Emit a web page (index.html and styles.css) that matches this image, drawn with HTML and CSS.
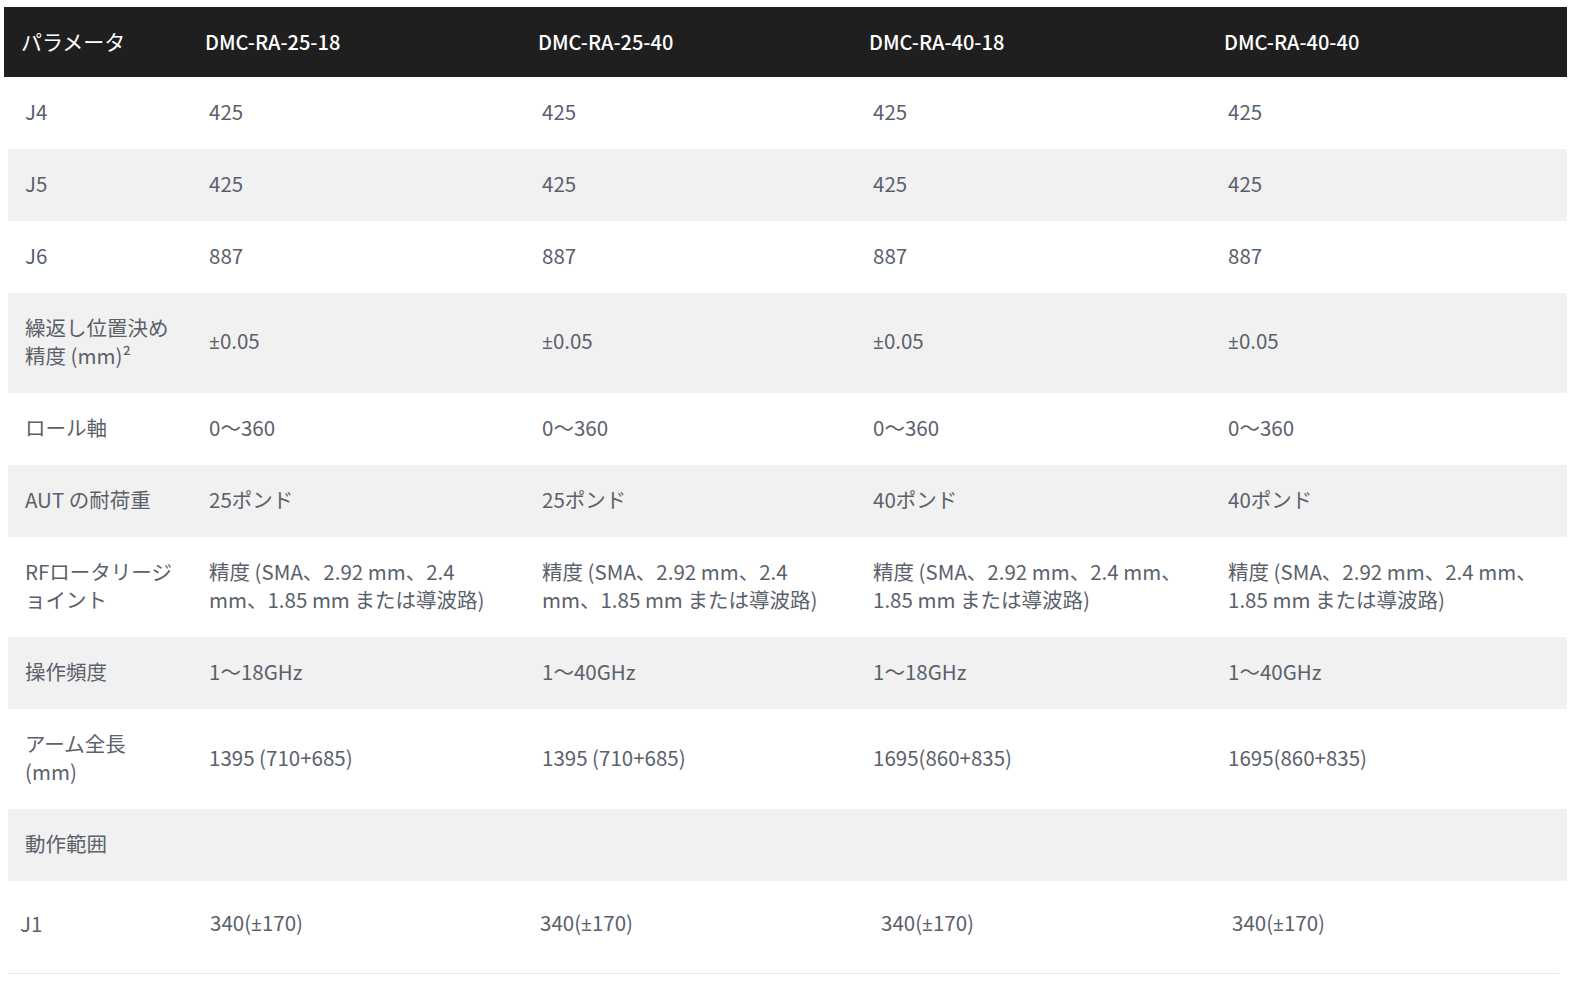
FILE: index.html
```html
<!DOCTYPE html>
<html lang="ja">
<head>
<meta charset="utf-8">
<title>仕様</title>
<link rel="stylesheet" href="styles.css">
</head>
<body>
<div class="page">
  <div class="spec">
    <div class="row head">
      <div class="cell"><span class="jp">パラメータ</span></div>
      <div class="cell">DMC-RA-25-18</div>
      <div class="cell">DMC-RA-25-40</div>
      <div class="cell">DMC-RA-40-18</div>
      <div class="cell">DMC-RA-40-40</div>
    </div>
    <div class="row">
      <div class="cell label">J4</div>
      <div class="cell">425</div>
      <div class="cell">425</div>
      <div class="cell">425</div>
      <div class="cell">425</div>
    </div>
    <div class="row alt">
      <div class="cell label">J5</div>
      <div class="cell">425</div>
      <div class="cell">425</div>
      <div class="cell">425</div>
      <div class="cell">425</div>
    </div>
    <div class="row">
      <div class="cell label">J6</div>
      <div class="cell">887</div>
      <div class="cell">887</div>
      <div class="cell">887</div>
      <div class="cell">887</div>
    </div>
    <div class="row alt">
      <div class="cell label">繰返し位置決め精度 (mm)²</div>
      <div class="cell"><span class="pm">±</span>0.05</div>
      <div class="cell"><span class="pm">±</span>0.05</div>
      <div class="cell"><span class="pm">±</span>0.05</div>
      <div class="cell"><span class="pm">±</span>0.05</div>
    </div>
    <div class="row">
      <div class="cell label">ロール軸</div>
      <div class="cell">0～360</div>
      <div class="cell">0～360</div>
      <div class="cell">0～360</div>
      <div class="cell">0～360</div>
    </div>
    <div class="row alt">
      <div class="cell label">AUT の耐荷重</div>
      <div class="cell">25ポンド</div>
      <div class="cell">25ポンド</div>
      <div class="cell">40ポンド</div>
      <div class="cell">40ポンド</div>
    </div>
    <div class="row">
      <div class="cell label">RFロータリージョイント</div>
      <div class="cell">精度 (SMA、2.92 mm、2.4 mm、1.85 mm または導波路)</div>
      <div class="cell">精度 (SMA、2.92 mm、2.4 mm、1.85 mm または導波路)</div>
      <div class="cell">精度 (SMA、2.92 mm、2.4 mm、1.85 mm または導波路)</div>
      <div class="cell">精度 (SMA、2.92 mm、2.4 mm、1.85 mm または導波路)</div>
    </div>
    <div class="row alt">
      <div class="cell label">操作頻度</div>
      <div class="cell">1～18GHz</div>
      <div class="cell">1～40GHz</div>
      <div class="cell">1～18GHz</div>
      <div class="cell">1～40GHz</div>
    </div>
    <div class="row">
      <div class="cell label">アーム全長 (mm)</div>
      <div class="cell">1395 (710+685)</div>
      <div class="cell">1395 (710+685)</div>
      <div class="cell">1695(860+835)</div>
      <div class="cell">1695(860+835)</div>
    </div>
    <div class="row alt">
      <div class="cell label">動作範囲</div>
      <div class="cell"></div>
      <div class="cell"></div>
      <div class="cell"></div>
      <div class="cell"></div>
    </div>
    <div class="row range">
      <div class="cell label">J1</div>
      <div class="cell">340(<span class="pm">±</span>170)</div>
      <div class="cell">340(<span class="pm">±</span>170)</div>
      <div class="cell">340(<span class="pm">±</span>170)</div>
      <div class="cell">340(<span class="pm">±</span>170)</div>
    </div>
  </div>
</div>
</body>
</html>
```

FILE: styles.css
```css
html, body {
  margin: 0;
  padding: 0;
  background: #ffffff;
}

.page {
  padding: 7px 0 0 8px;
  font-family: "Noto Sans CJK JP", "Noto Sans", sans-serif;
  font-size: 20.5px;
  line-height: 28px;
  color: #5a616b;
}

.spec {
  width: 1559px;
}

.row {
  display: grid;
  grid-template-columns: 184px 333px 331px 355px 356px;
  align-items: center;
}

.row.alt {
  background: #f1f1f1;
}

.cell {
  padding: 20px 20px 24px 17px;
}

.cell.label {
  padding-right: 10px;
}

.pm {
  font-family: "Noto Sans", "Open Sans", sans-serif;
  font-size: 19px;
}

.row.head {
  margin-left: -4px;
  height: 70px;
  background: #1f1f20;
  color: #ffffff;
  font-size: 20px;
  font-weight: 500;
}

.row.head .cell {
  padding-top: 0;
  padding-bottom: 1px;
}

.row.head .jp {
  font-size: 21px;
  font-weight: 400;
}

.row.range {
  width: 1551px;
  grid-template-columns: 190px 330px 341px 351px 339px;
  border-bottom: 1px solid #e6e6e6;
}

.row.range .cell {
  padding: 27px 20px 35px 12px;
}
```
